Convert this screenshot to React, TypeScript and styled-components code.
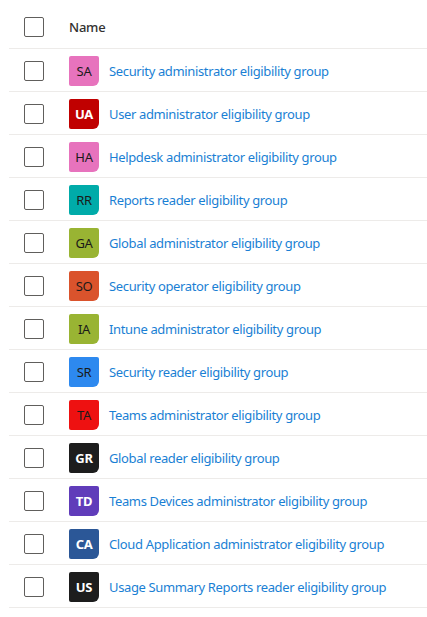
import React from "react";
import styled, { createGlobalStyle } from "styled-components";

const GlobalStyle = createGlobalStyle`
  html, body { margin: 0; padding: 0; background: #ffffff; }
  body { font-family: "Segoe UI", "Noto Sans", "Open Sans", sans-serif; }
`;

type Group = { initials: string; name: string; bg: string; dark: boolean };

const groups: Group[] = [
  { initials: "SA", name: "Security administrator eligibility group", bg: "#e773bd", dark: false },
  { initials: "UA", name: "User administrator eligibility group", bg: "#c00000", dark: true },
  { initials: "HA", name: "Helpdesk administrator eligibility group", bg: "#e773bd", dark: false },
  { initials: "RR", name: "Reports reader eligibility group", bg: "#00aba9", dark: false },
  { initials: "GA", name: "Global administrator eligibility group", bg: "#99b433", dark: false },
  { initials: "SO", name: "Security operator eligibility group", bg: "#da532c", dark: false },
  { initials: "IA", name: "Intune administrator eligibility group", bg: "#99b433", dark: false },
  { initials: "SR", name: "Security reader eligibility group", bg: "#2d89ef", dark: false },
  { initials: "TA", name: "Teams administrator eligibility group", bg: "#ee1111", dark: false },
  { initials: "GR", name: "Global reader eligibility group", bg: "#1d1d1d", dark: true },
  { initials: "TD", name: "Teams Devices administrator eligibility group", bg: "#603cba", dark: true },
  { initials: "CA", name: "Cloud Application administrator eligibility group", bg: "#2b5797", dark: true },
  { initials: "US", name: "Usage Summary Reports reader eligibility group", bg: "#1d1d1d", dark: true },
];

const Table = styled.div`
  margin-left: 9px;
  display: flex;
  flex-direction: column;
`;

const HeaderRow = styled.div`
  display: flex;
  align-items: center;
  box-sizing: border-box;
  height: 49px;
  padding-top: 6px;
  border-bottom: 1px solid #edebe9;
`;

const Row = styled.div`
  display: flex;
  align-items: center;
  box-sizing: border-box;
  height: 43px;
  padding-top: 1px;
  border-bottom: 1px solid #edebe9;
`;

const CheckCell = styled.div`
  width: 60px;
  padding-left: 15px;
  box-sizing: border-box;
  display: flex;
  align-items: center;
`;

const Checkbox = styled.div`
  width: 20px;
  height: 20px;
  box-sizing: border-box;
  border: 1px solid #605e5c;
  border-radius: 2px;
  background: #ffffff;
`;

const HeaderLabel = styled.div`
  font-size: 13px;
  font-weight: 500;
  color: #323130;
  letter-spacing: -0.2px;
`;

const Avatar = styled.div<{ $bg: string; $dark: boolean }>`
  width: 30px;
  height: 30px;
  flex: 0 0 30px;
  border-radius: 2px 2px 6px 2px;
  background: ${(p) => p.$bg};
  color: ${(p) => (p.$dark ? "#ffffff" : "#1b1a19")};
  font-weight: ${(p) => (p.$dark ? 700 : 400)};
  font-size: 13px;
  letter-spacing: -0.3px;
  display: flex;
  align-items: center;
  justify-content: center;
  margin-right: 10px;
`;

const NameLink = styled.a`
  font-size: 13px;
  letter-spacing: -0.36px;
  color: #1a7fd4;
  text-decoration: none;
  white-space: nowrap;
`;

export default function App() {
  return (
    <>
      <GlobalStyle />
      <Table>
        <HeaderRow>
          <CheckCell>
            <Checkbox />
          </CheckCell>
          <HeaderLabel>Name</HeaderLabel>
        </HeaderRow>
        {groups.map((g) => (
          <Row key={g.initials + g.name}>
            <CheckCell>
              <Checkbox />
            </CheckCell>
            <Avatar $bg={g.bg} $dark={g.dark}>
              {g.initials}
            </Avatar>
            <NameLink href="#">{g.name}</NameLink>
          </Row>
        ))}
      </Table>
    </>
  );
}
